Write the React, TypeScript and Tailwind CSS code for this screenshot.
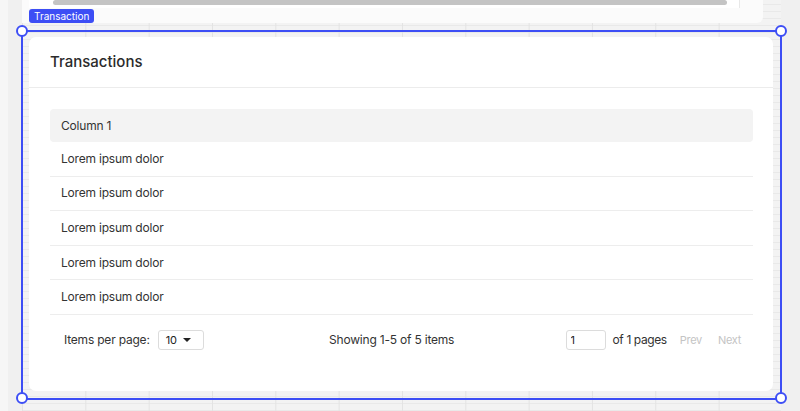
const rows = ["Lorem ipsum dolor", "Lorem ipsum dolor", "Lorem ipsum dolor", "Lorem ipsum dolor", "Lorem ipsum dolor"];

function Handle({ className }: { className: string }) {
  return <span className={`absolute h-[12px] w-[12px] rounded-full border-2 border-[#3d4ef5] bg-white ${className}`} />;
}

function Footer() {
  return (
    <div className="flex items-center justify-between pl-[14px] pr-[12px] pt-[15px] text-[12px] tracking-[-0.2px] text-[#333]">
      <div className="flex items-center gap-[8px]">
        <span>Items per page:</span>
        <button className="flex h-[20px] w-[46px] items-center justify-between rounded-[3px] border border-[#dcdcdc] pl-[7px] pr-[12px] text-[11px] text-[#222]">
          10
          <span className="h-0 w-0 border-x-[4px] border-t-[4px] border-x-transparent border-t-[#222]" />
        </button>
      </div>
      <span className="ml-[14px]">Showing 1-5 of 5 items</span>
      <div className="flex items-center">
        <input
          readOnly
          value="1"
          className="h-[20px] w-[40px] rounded-[3px] border border-[#dcdcdc] px-[4px] text-[11px] text-[#222] outline-none"
        />
        <span className="ml-[7px] tracking-[-0.4px]">of 1 pages</span>
        <button className="ml-[13px] text-[11px] tracking-[-0.3px] text-[#c4c4c4]">Prev</button>
        <button className="ml-[16px] text-[11px] tracking-[-0.3px] text-[#c4c4c4]">Next</button>
      </div>
    </div>
  );
}

export default function App() {
  return (
    <div
      className="relative h-[411px] w-[800px] overflow-hidden bg-[#f0f0f0]"
      style={{ fontFamily: "Inter, 'Liberation Sans', sans-serif" }}
    >
      <div className="absolute inset-y-0 left-0 w-[8px] bg-[#f6f6f6]" />
      {/* canvas grid */}
      <div className="absolute inset-y-0 left-[22px] right-[19px] bg-[#f3f3f3] bg-[linear-gradient(to_right,#e3e3e3_1px,transparent_1px),linear-gradient(to_bottom,#e9e9e9_1px,transparent_1px)] bg-[size:63.33px_100%,100%_7px] bg-[position:0_0,0_4px]" />

      {/* previous component, cut off at top */}
      <div className="absolute left-[22px] top-[-20px] h-[43px] w-[741px] rounded-br-[6px] bg-[#fbfbfb]">
        <div className="ml-[7px] h-[28px] w-[711px] border-r border-[#e8e8e8] bg-white pt-[20px]">
          <div className="ml-[24px] h-[5px] w-[674px] rounded-full bg-[#c4c4c4]" />
        </div>
      </div>

      {/* selected component */}
      <div className="absolute left-[29px] top-[37px] flex h-[354px] w-[744px] flex-col rounded-[7px] bg-white">
        <div className="flex h-[51px] items-center border-b border-[#ececec] px-[21px]">
          <h2 className="text-[15px] font-medium text-[#2b2b2b]">Transactions</h2>
        </div>
        <div className="pl-[21px] pr-[20px] pt-[21px]">
          <div className="flex h-[33px] items-center rounded-[4px] bg-[#f3f3f3] px-[11px] text-[12px] tracking-[-0.2px] text-[#333]">
            Column 1
          </div>
          {rows.map((r, i) => (
            <div key={i} className="flex h-[34.6px] items-center border-b border-[#ededed] px-[11px] text-[12px] tracking-[-0.2px] text-[#333]">
              {r}
            </div>
          ))}
          <Footer />
        </div>
      </div>

      {/* selection outline */}
      <div className="absolute left-[21px] top-[30px] h-[370px] w-[761px] border-2 border-[#3d4ef5]" />
      <Handle className="left-[16px] top-[25px]" />
      <Handle className="left-[775px] top-[25px]" />
      <Handle className="left-[16px] top-[392px]" />
      <Handle className="left-[775px] top-[392px]" />
      <span className="absolute left-[29px] top-[9px] flex h-[14px] items-center rounded-[3px] bg-[#3d4ef5] px-[5px] text-[10px] leading-none text-white">
        Transaction
      </span>
    </div>
  );
}
